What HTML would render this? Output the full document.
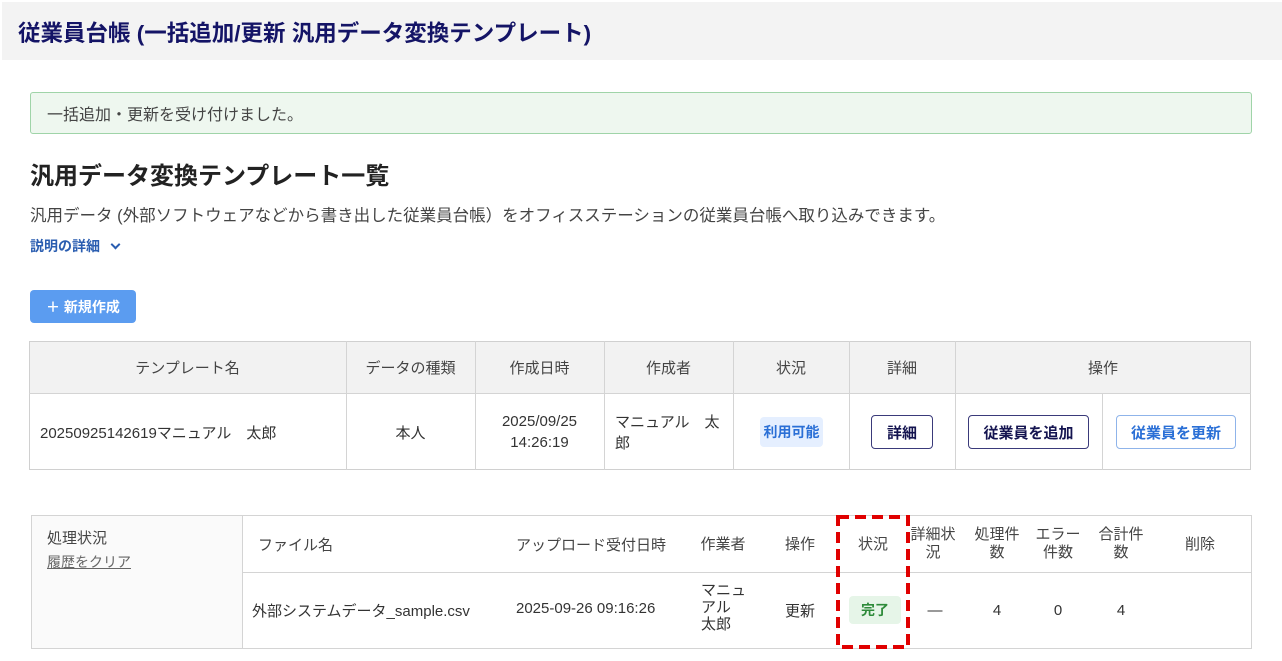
<!DOCTYPE html>
<html><head><meta charset="utf-8"><style>
*{box-sizing:border-box;margin:0;padding:0}
body{width:1282px;height:661px;background:#fff;font-family:"Liberation Sans","Noto Sans CJK JP",sans-serif;color:#333;position:relative;overflow:hidden}
.a{position:absolute;white-space:nowrap}
.c{position:absolute;display:flex;align-items:center;justify-content:center;text-align:center;font-size:15px;color:#444}
.hl{position:absolute;background:#d4d4d4}
.btn{position:absolute;display:flex;align-items:center;justify-content:center;font-size:15px;font-weight:bold;border-radius:4px}
</style></head><body>
<div class="a" style="left:2px;top:2px;width:1280px;height:58px;background:#f3f3f3"></div>
<div class="a" style="left:18px;top:16px;font-size:22.5px;font-weight:bold;color:#141466">従業員台帳 (一括追加/更新 汎用データ変換テンプレート)</div>
<div class="a" style="left:30px;top:92px;width:1222px;height:42px;background:#eef7ef;border:1px solid #9fd4a8;border-radius:3px"></div>
<div class="a" style="left:47px;top:101px;font-size:16px;color:#444">一括追加・更新を受け付けました。</div>
<div class="a" style="left:30px;top:156px;font-size:24px;font-weight:bold;color:#222">汎用データ変換テンプレート一覧</div>
<div class="a" style="left:30px;top:202px;font-size:16.5px;color:#444">汎用データ (外部ソフトウェアなどから書き出した従業員台帳）をオフィスステーションの従業員台帳へ取り込みできます。</div>
<div class="a" style="left:30px;top:236px;font-size:14px;font-weight:bold;color:#2a5db0">説明の詳細 <span style="display:inline-block;width:7px;height:7px;border-right:2px solid #2a5db0;border-bottom:2px solid #2a5db0;transform:rotate(45deg);margin-left:8px;position:relative;top:-3px"></span></div>
<div class="btn" style="left:30px;top:290px;width:106px;height:33px;background:#5b9cf0;color:#fff;font-size:14px">＋ 新規作成</div>

<div class="a" style="left:29px;top:341px;width:1222px;height:53px;background:#f2f2f2"></div>
<div class="a" style="left:29px;top:341px;width:1222px;height:129px;border:1px solid #d0d0d0"></div>
<div class="hl" style="left:29px;top:393px;width:1222px;height:1px"></div>
<div class="hl" style="left:346px;top:341px;width:1px;height:129px"></div>
<div class="hl" style="left:475px;top:341px;width:1px;height:129px"></div>
<div class="hl" style="left:604px;top:341px;width:1px;height:129px"></div>
<div class="hl" style="left:733px;top:341px;width:1px;height:129px"></div>
<div class="hl" style="left:849px;top:341px;width:1px;height:129px"></div>
<div class="hl" style="left:955px;top:341px;width:1px;height:129px"></div>
<div class="hl" style="left:1102px;top:394px;width:1px;height:76px"></div>
<div class="c" style="left:29px;top:341px;width:317px;height:53px">テンプレート名</div>
<div class="c" style="left:346px;top:341px;width:129px;height:53px">データの種類</div>
<div class="c" style="left:475px;top:341px;width:129px;height:53px">作成日時</div>
<div class="c" style="left:604px;top:341px;width:129px;height:53px">作成者</div>
<div class="c" style="left:733px;top:341px;width:116px;height:53px">状況</div>
<div class="c" style="left:849px;top:341px;width:106px;height:53px">詳細</div>
<div class="c" style="left:955px;top:341px;width:296px;height:53px">操作</div>
<div class="a" style="left:40px;top:422px;font-size:15px;color:#333">20250925142619マニュアル　太郎</div>
<div class="c" style="left:346px;top:394px;width:129px;height:76px;color:#333">本人</div>
<div class="c" style="left:475px;top:394px;width:129px;height:76px;color:#333;line-height:21px">2025/09/25<br>14:26:19</div>
<div class="a" style="left:615px;top:412px;font-size:15px;line-height:21px;color:#333">マニュアル　太<br>郎</div>
<div class="btn" style="left:760px;top:417px;width:63px;height:30px;background:#e5efff;color:#2a6fd6;font-size:14px">利用可能</div>
<div class="btn" style="left:871px;top:415px;width:62px;height:34px;border:1.5px solid #3a3a7a;color:#141450">詳細</div>
<div class="btn" style="left:968px;top:415px;width:121px;height:34px;border:1.5px solid #3a3a7a;color:#141450">従業員を追加</div>
<div class="btn" style="left:1116px;top:415px;width:120px;height:34px;border:1.5px solid #8fb4ea;color:#2a6fd6">従業員を更新</div>

<div class="a" style="left:31px;top:515px;width:211px;height:133px;background:#fafafa"></div>
<div class="a" style="left:31px;top:515px;width:1221px;height:134px;border:1px solid #d4d4d4"></div>
<div class="hl" style="left:242px;top:515px;width:1px;height:134px"></div>
<div class="hl" style="left:242px;top:572px;width:1010px;height:1px"></div>
<div class="a" style="left:47px;top:527px;font-size:15px;color:#444">処理状況</div>
<div class="a" style="left:47px;top:552px;font-size:14px;color:#666;text-decoration:underline">履歴をクリア</div>
<div class="a" style="left:258px;top:534px;font-size:15px;color:#444">ファイル名</div>
<div class="a" style="left:516px;top:534px;font-size:15px;color:#444">アップロード受付日時</div>
<div class="c" style="left:690px;top:515px;width:66px;height:57px">作業者</div>
<div class="c" style="left:770px;top:515px;width:60px;height:57px">操作</div>
<div class="c" style="left:840px;top:515px;width:66px;height:57px">状況</div>
<div class="c" style="left:908px;top:515px;width:50px;height:57px;line-height:18px">詳細状<br>況</div>
<div class="c" style="left:962px;top:515px;width:70px;height:57px;line-height:18px">処理件<br>数</div>
<div class="c" style="left:1028px;top:515px;width:60px;height:57px;line-height:18px">エラー<br>件数</div>
<div class="c" style="left:1088px;top:515px;width:66px;height:57px;line-height:18px">合計件<br>数</div>
<div class="c" style="left:1170px;top:515px;width:60px;height:57px">削除</div>
<div class="a" style="left:252px;top:600px;font-size:15px;color:#333">外部システムデータ_sample.csv</div>
<div class="a" style="left:516px;top:600px;font-size:15px;color:#333">2025-09-26 09:16:26</div>
<div class="a" style="left:701px;top:582px;font-size:15px;line-height:17px;color:#333">マニュ<br>アル<br>太郎</div>
<div class="c" style="left:770px;top:573px;width:60px;height:75px;color:#333">更新</div>
<div class="btn" style="left:849px;top:596px;width:52px;height:28px;background:#e6f5e8;color:#2e8b3a;font-size:14px">完了</div>
<div class="c" style="left:912px;top:573px;width:46px;height:75px;color:#333">—</div>
<div class="c" style="left:962px;top:573px;width:70px;height:75px;color:#333">4</div>
<div class="c" style="left:1028px;top:573px;width:60px;height:75px;color:#333">0</div>
<div class="c" style="left:1088px;top:573px;width:66px;height:75px;color:#333">4</div>
<svg class="a" style="left:836px;top:515px" width="74" height="134"><rect x="2" y="2" width="70" height="130" fill="none" stroke="#e00000" stroke-width="4" stroke-dasharray="11 6"/></svg>
</body></html>
